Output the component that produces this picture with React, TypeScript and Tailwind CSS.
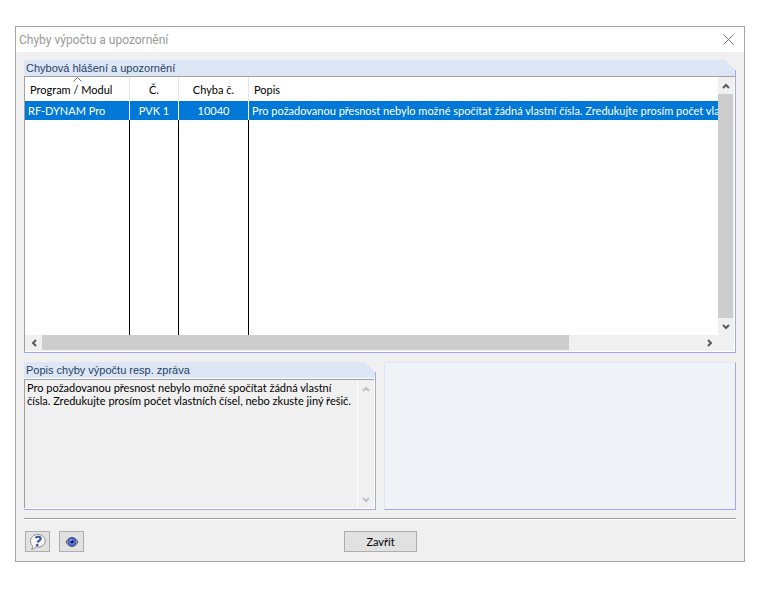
import type { ReactNode } from "react";
import clsx from "clsx";

const MESSAGES = [
  {
    program: "RF-DYNAM Pro",
    no: "PVK 1",
    error: "10040",
    text: "Pro požadovanou přesnost nebylo možné spočítat žádná vlastní čísla. Zredukujte prosím počet vlastních čísel, nebo zkuste jiný řešič.",
  },
];

type Direction = "up" | "down" | "left" | "right";

const CHEVRONS: Record<Direction, string> = {
  up: "M1 6 L4 3 L7 6",
  down: "M1 2 L4 5 L7 2",
  left: "M6 1 L3 4 L6 7",
  right: "M2 1 L5 4 L2 7",
};

const LABELS: Record<Direction, string> = {
  up: "Nahoru",
  down: "Dolů",
  left: "Vlevo",
  right: "Vpravo",
};

function ScrollButton({ dir, disabled }: { dir: Direction; disabled?: boolean }) {
  const vertical = dir === "up" || dir === "down";
  return (
    <button
      type="button"
      aria-label={LABELS[dir]}
      disabled={disabled}
      className={clsx(
        "flex shrink-0 items-center justify-center bg-[#f0f0f0]",
        vertical ? "h-[17px] w-full" : "h-full w-[17px]",
        disabled ? "text-[#bfbfbf]" : "text-[#5a5a5a]",
      )}
    >
      <svg viewBox="0 0 8 8" className="size-2" fill="none" stroke="currentColor" strokeWidth="2">
        <path d={CHEVRONS[dir]} />
      </svg>
    </button>
  );
}

// Frame with the blue caption strip; its top right corner is cut off.
function Group({ title, children }: { title: string; children: ReactNode }) {
  return (
    <section className="relative flex flex-col">
      <h2 className="h-4 bg-[#dce6f5] pl-0.5 font-['Liberation_Sans',sans-serif] text-[11px] leading-4 text-[#1f3f66] [clip-path:polygon(0_0,calc(100%-11px)_0,100%_11px,100%_100%,0_100%)]">
        {title}
      </h2>
      {children}
      <span className="pointer-events-none absolute top-2.5 right-0 bottom-0 w-px bg-[#a6a6ec]" />
    </section>
  );
}

function HelpIcon() {
  return (
    <svg viewBox="0 0 18 18" className="size-[18px]" fill="none">
      <path
        d="M9.5 2.500c4 0 7 2.500 7 6s-3 6-7 6c-.8 0-1.500-.1-2.200-.3C6 15.800 4.500 16.700 2.500 17c.9-1 1.300-2 1.200-3.500C2.300 12.400 1.500 10.500 1.500 8.500c0-3.500 3.600-6 8-6z"
        fill="#c4c4c4"
      />
      <path
        d="M9 1.500c4.200 0 7.200 2.700 7.200 6.300S13.200 14 9 14c-.8 0-1.500-.1-2.200-.3C5.600 15 4.300 15.900 2.500 16.200c.9-1 1.300-2.200 1-3.600C2.200 11.500 1.500 9.800 1.500 7.900c0-3.700 3.300-6.400 7.500-6.400z"
        fill="#f6f6f6"
        stroke="#909090"
      />
      <path d="M6.600 5.200c.8-2 5.400-2 5 .6-.3 1.900-2.500 1.700-3 3.800" stroke="#3a55a8" strokeWidth="2.200" />
      <circle cx="8.200" cy="12" r="1.300" fill="#3a55a8" />
    </svg>
  );
}

function EyeIcon() {
  return (
    <svg viewBox="0 0 14 12" className="h-3 w-3.5" fill="none">
      <path d="M1 6c1.600-3 3.800-4.500 6-4.500S11.400 3 13 6c-1.600 3-3.800 4.500-6 4.500S2.600 9 1 6z" fill="#c8c8c8" stroke="#555555" />
      <circle cx="7" cy="5.800" r="4" fill="#4f78ee" stroke="#2a3f90" strokeWidth=".8" />
      <circle cx="7" cy="5.800" r="1.500" fill="#05081c" />
      <circle cx="6" cy="4.300" r=".8" fill="#b8ccff" />
    </svg>
  );
}

function MessageTable() {
  return (
    <div className="border-t border-b border-l border-t-[#a0a0a0] border-b-[#a6a6ec] border-l-[#a0a0a0] bg-white pr-0.5 pb-px">
      <div className="flex">
        <div className="h-[258px] min-w-0 flex-1 overflow-hidden">
          <table className="h-full w-full table-fixed border-separate border-spacing-0">
            <colgroup>
              <col className="w-[105px]" />
              <col className="w-[49px]" />
              <col className="w-[70px]" />
              <col />
            </colgroup>
            <thead>
              <tr className="h-6 text-center *:border-r *:border-[#e5e5e5] *:font-normal *:last:border-r-0">
                <th className="relative pl-[5px] text-left">
                  Program / Modul
                  <svg
                    viewBox="0 0 9 5"
                    className="absolute top-0 left-12 h-[5px] w-[9px]"
                    fill="none"
                    stroke="#6d6d6d"
                  >
                    <path d="M.5 4.500 L4.500 .5 L8.500 4.500" />
                  </svg>
                </th>
                <th>Č.</th>
                <th>Chyba č.</th>
                <th className="pl-[5px] text-left">Popis</th>
              </tr>
            </thead>
            <tbody>
              {MESSAGES.map((m) => (
                <tr
                  key={m.error}
                  className="h-[19px] bg-[#0078d7] text-white *:border-r *:border-white *:last:border-r-0"
                >
                  <td className="pl-[3px]">{m.program}</td>
                  <td className="text-center">{m.no}</td>
                  <td className="text-center">{m.error}</td>
                  <td className="overflow-hidden pl-[3px] whitespace-nowrap">{m.text}</td>
                </tr>
              ))}
              {/* Empty area, only carries the column lines down. */}
              <tr aria-hidden="true" className="*:border-r *:border-black *:last:border-r-0">
                <td />
                <td />
                <td />
                <td />
              </tr>
            </tbody>
          </table>
        </div>
        <div className="flex w-4 flex-col bg-[#f0f0f0] pr-px">
          <ScrollButton dir="up" />
          <div className="flex-1 bg-[#cdcdcd]" />
          <ScrollButton dir="down" />
        </div>
      </div>
      <div className="flex h-4 bg-[#f0f0f0] pr-4 pb-px">
        <ScrollButton dir="left" />
        <div className="flex-1">
          <div className="h-full w-4/5 bg-[#cdcdcd]" />
        </div>
        <ScrollButton dir="right" />
      </div>
    </div>
  );
}

const BUTTON =
  "flex h-[21px] items-center justify-center border border-[#adadad] bg-[#e1e1e1] hover:border-[#0078d7]";

export default function App() {
  return (
    <div className="min-h-screen bg-white px-[15px] py-[26px] font-['Lato','DejaVu_Sans_Condensed',sans-serif] text-[11px] leading-[13px] text-black">
      <main className="border border-[#a5a5a5] bg-[#f0f0f0]">
        <header className="flex h-[25px] items-center justify-between bg-white pr-2.5 pl-[3px]">
          <h1 className="font-['Roboto',sans-serif] text-xs text-[#999999]">Chyby výpočtu a upozornění</h1>
          <button type="button" aria-label="Zavřít okno">
            <svg viewBox="0 0 11 11" className="size-[11px]" stroke="#777777">
              <path d="M.5 .5 L10.500 10.500 M10.500 .5 L.5 10.500" />
            </svg>
          </button>
        </header>

        <div className="px-2 pt-2 pb-[9px]">
          <Group title="Chybová hlášení a upozornění">
            <MessageTable />
          </Group>

          <div className="mt-[9px] grid grid-cols-2 gap-2">
            <Group title="Popis chyby výpočtu resp. zpráva">
              <div className="border-b border-[#a6a6ec] bg-white pt-px pr-0.5 pb-px">
                <div className="flex h-[129px] border-t border-l border-[#a0a0a0] bg-[#f0f0f0]">
                  <textarea
                    readOnly
                    aria-label="Popis chyby"
                    value={MESSAGES[0].text}
                    className="min-w-0 flex-1 resize-none overflow-hidden border-r border-white px-0.5 py-px outline-none"
                  />
                  <div className="flex w-4 flex-col justify-between">
                    <ScrollButton dir="up" disabled />
                    <ScrollButton dir="down" disabled />
                  </div>
                </div>
              </div>
            </Group>
            <div className="border border-t-[#dce6f5] border-r-[#a6a6ec] border-b-[#a6a6ec] border-l-[#dce6f5] bg-[#f0f4f9]" />
          </div>

          <hr className="mt-2 h-0.5 border-t border-b border-t-[#a0a0a0] border-b-white" />

          <footer className="mt-[11px] grid grid-cols-[1fr_auto_1fr] pl-px">
            <div className="flex gap-[9px]">
              <button type="button" aria-label="Nápověda" className={clsx(BUTTON, "w-[25px]")}>
                <HelpIcon />
              </button>
              <button type="button" aria-label="Zobrazit" className={clsx(BUTTON, "w-[25px]")}>
                <EyeIcon />
              </button>
            </div>
            <button type="button" className={clsx(BUTTON, "w-[73px]")}>
              Zavřít
            </button>
          </footer>
        </div>
      </main>
    </div>
  );
}
